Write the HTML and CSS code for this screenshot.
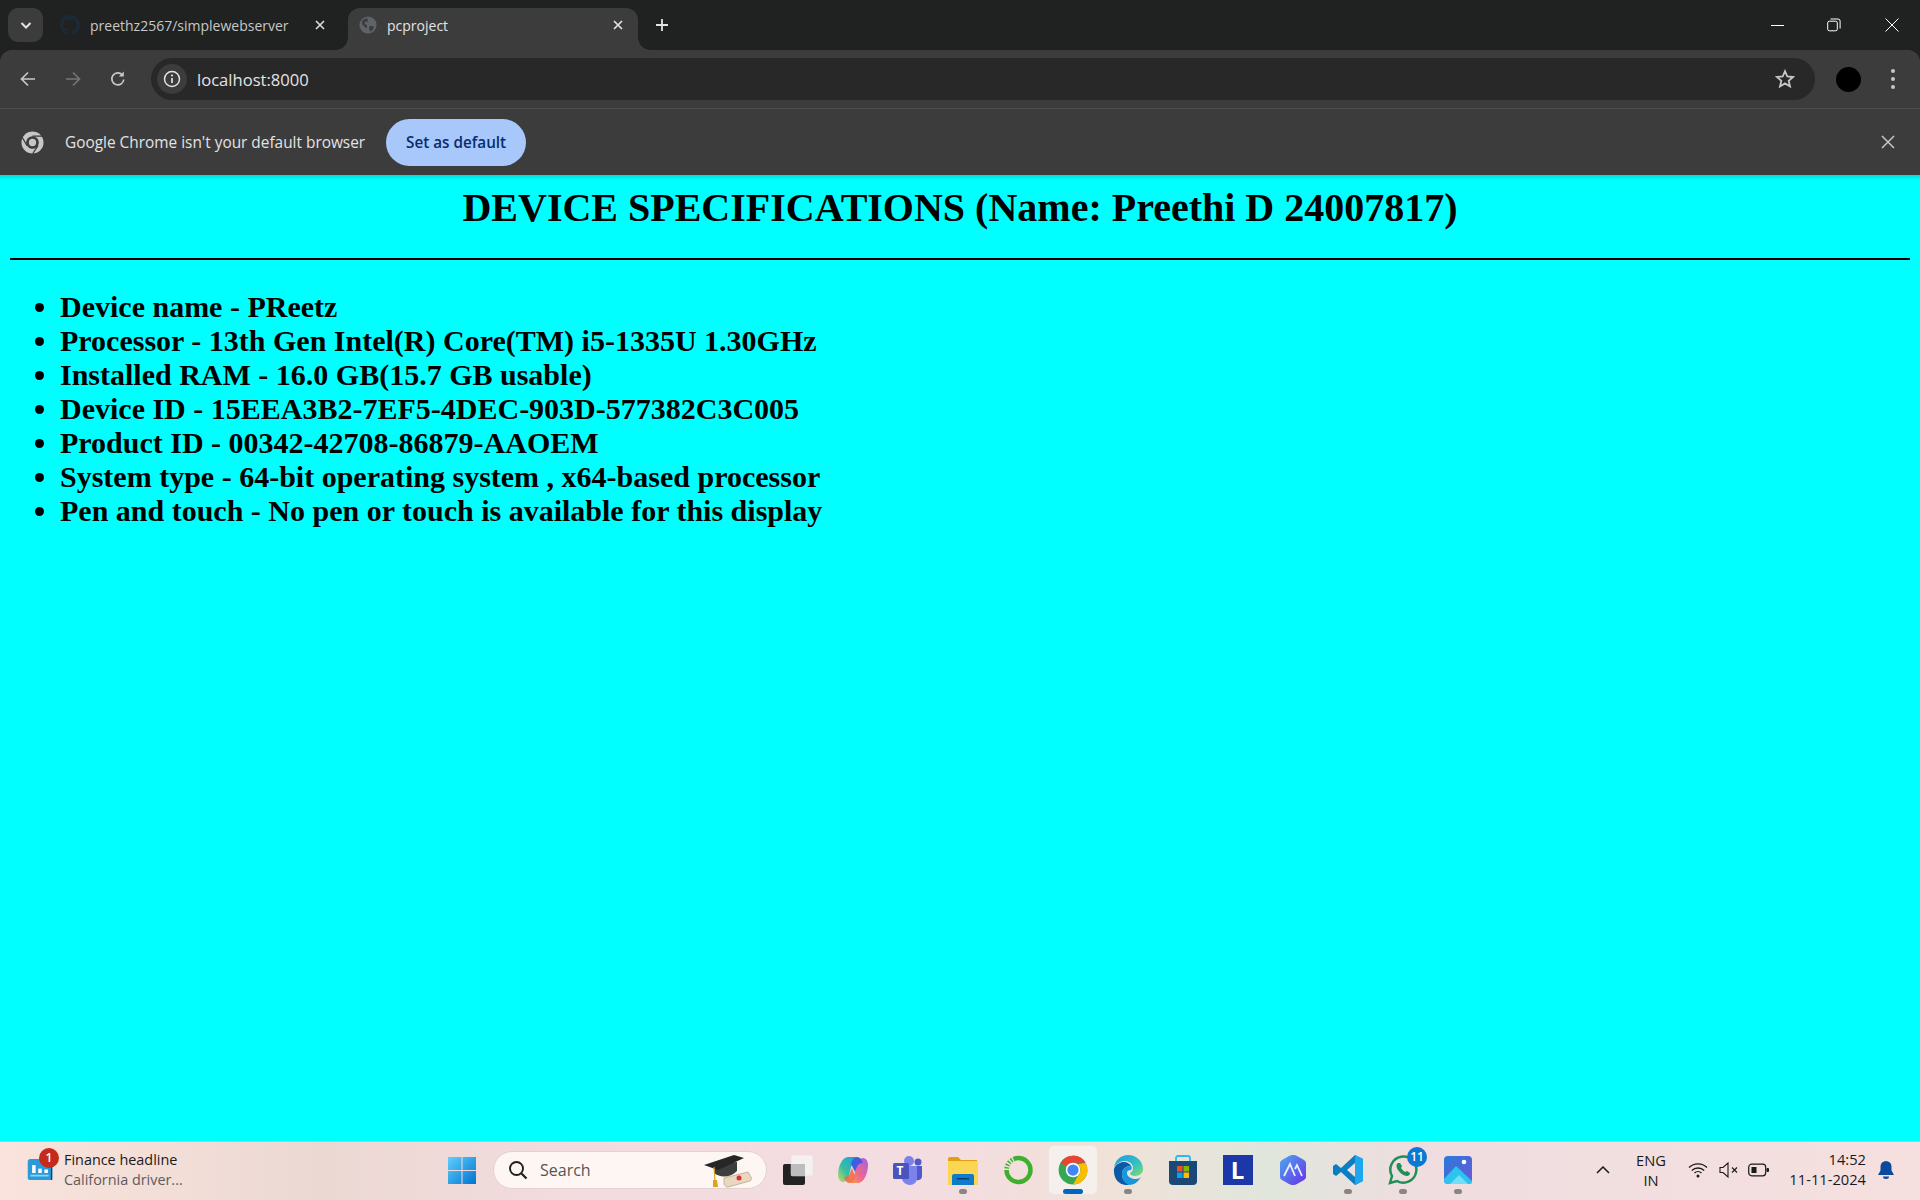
FILE: index.html
```html
<!DOCTYPE html>
<html lang="en">
<head>
<meta charset="utf-8">
<title>pcproject</title>
<link rel="stylesheet" href="styles.css">
</head>
<body>
<header class="browser">
  <div class="tabstrip">
    <button class="tabsearch"><svg class="i14" viewBox="0 0 14 14"><path d="M2.5 5l4.5 4.5L11.5 5" fill="none" stroke="#e3e3e3" stroke-width="2"/></svg></button>
    <div class="tab">
      <svg class="fav" viewBox="0 0 16 16"><path fill="#1d2a35" d="M8 0C3.58 0 0 3.58 0 8c0 3.54 2.29 6.53 5.47 7.59.4.07.55-.17.55-.38v-1.49c-2.01.37-2.53-.49-2.69-.94-.09-.23-.48-.94-.82-1.13-.28-.15-.68-.52-.01-.53.63-.01 1.08.58 1.23.82.72 1.21 1.87.87 2.33.66.07-.52.28-.87.51-1.07-1.78-.2-3.64-.89-3.64-3.95 0-.87.31-1.59.82-2.15-.08-.2-.36-1.02.08-2.12 0 0 .67-.21 2.2.82.64-.18 1.32-.27 2-.27s1.36.09 2 .27c1.53-1.04 2.2-.82 2.2-.82.44 1.1.16 1.92.08 2.12.51.56.82 1.27.82 2.15 0 3.07-1.87 3.75-3.65 3.95.29.25.54.73.54 1.48v2.2c0 .21.15.46.55.38A8.01 8.01 0 0 0 16 8c0-4.42-3.58-8-8-8z"/></svg>
      <span class="tabtitle">preethz2567/simplewebserver</span>
      <svg class="tabx" viewBox="0 0 12 12"><path d="M2 2l8 8M10 2l-8 8" stroke="#d8d8d8" stroke-width="1.7"/></svg>
    </div>
    <div class="tab active">
      <svg class="fav" viewBox="0 0 20 20"><circle cx="10" cy="10" r="9.500" fill="#5f6368"/><path fill="#3c3c3c" d="M9 2.200C7 3 4.600 3.900 3.200 5.800l.5 3.600L7.500 13l1.500 .3-.1-3L6 8.200l1-1.700 3.200-.5zM13.500 11l-2 .5-.2 3.500 1.500 2.500 3-3 .7-3z"/></svg>
      <span class="tabtitle">pcproject</span>
      <svg class="tabx" viewBox="0 0 12 12"><path d="M2 2l8 8M10 2l-8 8" stroke="#e3e3e3" stroke-width="1.7"/></svg>
    </div>
    <svg class="newtab" viewBox="0 0 14 14"><path d="M7 1v12M1 7h12" stroke="#e3e3e3" stroke-width="1.8"/></svg>
    <div class="winctl">
      <svg viewBox="0 0 14 14"><path d="M0 7.5h13" stroke="#fff" stroke-width="1"/></svg>
      <svg viewBox="0 0 14 14"><rect x=".7" y="3.2" width="9.6" height="9.6" rx="1.6" fill="none" stroke="#fff" stroke-width="1"/><path d="M3.5 1h7.600a2 2 0 0 1 2 2v7.500" fill="none" stroke="#fff" stroke-width="1"/></svg>
      <svg viewBox="0 0 14 14"><path d="M.5.5l13 13M13.500.5l-13 13" stroke="#fff" stroke-width="1"/></svg>
    </div>
  </div>
  <div class="toolbar">
    <svg class="navicon" viewBox="0 0 18 18"><path d="M16 9H3M9 2.500L2.500 9 9 15.500" fill="none" stroke="#c7c7c7" stroke-width="1.700"/></svg>
    <svg class="navicon" viewBox="0 0 18 18"><path d="M2 9h13M9 2.500L15.500 9 9 15.500" fill="none" stroke="#757575" stroke-width="1.700"/></svg>
    <svg class="navicon" viewBox="0 0 18 18"><path d="M14.800 9.500A6 6 0 1 1 13.200 4.700" fill="none" stroke="#c7c7c7" stroke-width="1.700"/><path d="M14.800 1.500v5h-5z" fill="#c7c7c7"/></svg>
    <div class="omnibox">
      <span class="siteinfo"><svg class="i18" viewBox="0 0 18 18"><circle cx="9" cy="9" r="7.500" fill="none" stroke="#e3e3e3" stroke-width="1.500"/><path d="M9 8v5" stroke="#e3e3e3" stroke-width="1.700"/><circle cx="9" cy="5.500" r="1.100" fill="#e3e3e3"/></svg></span>
      <span class="url">localhost:8000</span>
      <svg class="star" viewBox="0 0 20 20"><path d="M10 2.200l2.300 5.300 5.700.5-4.300 3.800 1.300 5.600-5-3-5 3 1.300-5.600L2 8l5.700-.5z" fill="none" stroke="#c7c7c7" stroke-width="1.800"/></svg>
    </div>
    <span class="avatar"></span>
    <span class="menu"><i></i><i></i><i></i></span>
  </div>
  <div class="infobar">
    <svg class="chromemono" viewBox="0 0 24 24"><circle cx="12" cy="12" r="11.500" fill="#c7c7c7"/><circle cx="12" cy="12" r="6.600" fill="#3c3c3c"/><circle cx="12" cy="12" r="3.800" fill="#c7c7c7"/><path d="M12 5.400h11M6.300 15.300L1.200 6.500M17.700 15.300L12 24" stroke="#3c3c3c" stroke-width="1.300"/></svg>
    <span class="infotext">Google Chrome isn't your default browser</span>
    <button class="setdefault">Set as default</button>
    <svg class="infox" viewBox="0 0 14 14"><path d="M1 1l12 12M13 1L1 13" stroke="#c7c7c7" stroke-width="1.500"/></svg>
  </div>
</header>

<main class="page">
  <h1>DEVICE SPECIFICATIONS (Name: Preethi D 24007817)</h1>
  <hr>
  <ul>
    <li>Device name - PReetz</li>
    <li>Processor - 13th Gen Intel(R) Core(TM) i5-1335U 1.30GHz</li>
    <li>Installed RAM - 16.0 GB(15.7 GB usable)</li>
    <li>Device ID - 15EEA3B2-7EF5-4DEC-903D-577382C3C005</li>
    <li>Product ID - 00342-42708-86879-AAOEM</li>
    <li>System type - 64-bit operating system , x64-based processor</li>
    <li>Pen and touch - No pen or touch is available for this display</li>
  </ul>
</main>

<footer class="taskbar">
  <div class="widget">
    <span class="widgeticon">
      <svg viewBox="0 0 28 24"><rect width="28" height="24" y="0" rx="3" fill="#2a9bd8"/><rect x="5" y="7" width="4" height="9" fill="#fff"/><rect x="12" y="11" width="4" height="5" fill="#fff"/><rect x="19" y="12" width="4" height="4" fill="#fff"/><rect x="3" y="18" width="21" height="2" fill="#7fdcf5"/><rect x="26.500" y="0" width="1.500" height="24" fill="#1a3a8a"/></svg>
      <b class="widgetbadge">1</b>
    </span>
    <span class="widgettext"><span class="wt1">Finance headline</span><span class="wt2">California driver...</span></span>
  </div>
  <div class="app start">
    <svg class="ic30" viewBox="0 0 30 30"><defs><linearGradient id="win" x1="0" y1="0" x2="1" y2="1"><stop offset="0" stop-color="#5fd0fb"/><stop offset="1" stop-color="#0073d1"/></linearGradient></defs><path fill="url(#win)" d="M1 2h13.500v13H1zM15.500 2H29v13H15.500zM1 16h13.500v13H1zM15.500 16H29v13H15.500z"/></svg>
  </div>
  <div class="search">
    <svg class="searchicon" viewBox="0 0 20 20"><circle cx="8.500" cy="8.500" r="6.500" fill="none" stroke="#1f1f1f" stroke-width="1.900"/><path d="M13.500 13.500l5 5" stroke="#1f1f1f" stroke-width="2.200"/></svg>
    <span class="searchtext">Search</span>
    <svg class="cap" viewBox="0 0 48 36"><path d="M20 26l24-6 3 5c1 2 0 3-1 4l-22 6c-2 .4-3-1-4-3z" fill="#e9d8bf" stroke="#b9a78a" stroke-width=".8"/><circle cx="35" cy="26" r="2.500" fill="#d9303a"/><path d="M10 12v9c6 5 16 5 23-2v-9z" fill="#3d3d3d"/><path d="M0 13L30 3l10 3-26 12z" fill="#262626"/><path d="M10 15l1 14" stroke="#d8a520" stroke-width="1.200"/><path d="M9 28h4l1 7h-5z" fill="#d8a520"/></svg>
  </div>
  <div class="apps">
    <div class="app"><svg class="ic30" viewBox="0 0 30 30"><rect x="0" y="9" width="22" height="21" rx="2" fill="#222"/><rect x="8" y="0" width="22" height="21" rx="2" fill="#f4f1f0" stroke="#ddd" stroke-width=".5"/><rect x="8" y="9" width="14" height="12" fill="#bdbdbd"/></svg></div>
    <div class="app"><svg class="ic30" viewBox="0 0 30 30"><defs><linearGradient id="cp1" x1="0" y1="1" x2="1" y2="0"><stop offset="0" stop-color="#d8d860"/><stop offset=".4" stop-color="#37c0a0"/><stop offset="1" stop-color="#1f9be8"/></linearGradient><linearGradient id="cp2" x1="1" y1="0" x2="0" y2="1"><stop offset="0" stop-color="#a860e0"/><stop offset=".6" stop-color="#f06a8a"/><stop offset="1" stop-color="#ffa040"/></linearGradient><linearGradient id="cp3" x1="0" y1="0" x2="1" y2="1"><stop offset="0" stop-color="#1f6ae0"/><stop offset="1" stop-color="#7048e0"/></linearGradient></defs><path fill="url(#cp1)" d="M10 2h9c-3 1-4 4-5 7l-3 11c-1 4-3 7-6 7-3 0-5-3-5-7C0 12 4 2 10 2z"/><path fill="url(#cp2)" d="M20 28h-9c3-1 4-4 5-7l3-11c1-4 3-7 6-7 3 0 5 3 5 7 0 8-4 18-10 18z"/><path fill="url(#cp3)" d="M13 9c1-4 3-7 6-7 3 0 5 3 6 6-3 0-5 1-6 4l-2 5z"/><path fill="#f0653f" d="M17 21c-1 4-3 7-6 7-2 0-4-3-5-6 3 0 5-1 6-4l2-5z" opacity=".85"/></svg></div>
    <div class="app"><svg class="ic30" viewBox="0 0 30 30"><circle cx="16" cy="6" r="5" fill="#7b83eb"/><circle cx="25" cy="7" r="3.500" fill="#5059c9"/><path d="M21 11h8v10c0 4-4 5-8 4z" fill="#5059c9"/><path d="M9 11h15v12c0 4-3 7-7 7s-8-3-8-7z" fill="#7b83eb"/><rect x="0" y="8" width="16" height="16" rx="1.500" fill="#4b53bc"/></svg><b class="teamst">T</b></div>
    <div class="app dotted"><svg class="ic30" viewBox="0 0 30 30"><path d="M0 4a2 2 0 0 1 2-2h8l3 3h16v6H0z" fill="#e0a010"/><path d="M0 6h30v24H0z" fill="#fcd653"/><path d="M4 30v-9a2 2 0 0 1 2-2h18a2 2 0 0 1 2 2v9z" fill="#0f7cc9"/><rect x="9" y="23" width="12" height="1.500" fill="#063d70"/></svg></div>
    <div class="app"><svg class="ic30" viewBox="0 0 30 30"><circle cx="15.500" cy="15" r="12" fill="none" stroke="#3fb02c" stroke-width="4.500"/><path d="M3.500 15a12 12 0 0 1 7-11" fill="none" stroke="#f0e2e2" stroke-width="5" stroke-dasharray="1.500 1.500"/></svg></div>
    <div class="app current"><svg class="ic30" viewBox="0 0 24 24"><circle cx="12" cy="12" r="11.500" fill="#34a853"/><path d="M12 .5a11.500 11.500 0 0 1 10 5.750H12a5.750 5.750 0 0 0-5 2.900L2 6.500A11.500 11.500 0 0 1 12 .5z" fill="#ea4335"/><path d="M22 6.250A11.500 11.500 0 0 1 12 23.500l5-8.600a5.750 5.750 0 0 0-1-7.500z" fill="#fbbc04"/><circle cx="12" cy="12" r="5.800" fill="#fff"/><circle cx="12" cy="12" r="4.500" fill="#4285f4"/></svg></div>
    <div class="app dotted"><svg class="ic30" viewBox="0 0 30 30"><defs><linearGradient id="edg" x1="0" y1="0" x2="1" y2="1"><stop offset="0" stop-color="#1b9de2"/><stop offset=".6" stop-color="#35c1c0"/><stop offset="1" stop-color="#7de26d"/></linearGradient></defs><path fill="url(#edg)" d="M15 0c8 0 15 6 15 14 0 4-3 7-8 7-3 0-5-1-5-3 2-1 3-2 3-5 0-4-4-7-8-7-5 0-9 3-11 7C2 5 8 0 15 0z"/><path fill="#0b5aa8" d="M1 14c2-5 6-7 10-7 3 0 6 2 7 4-5 0-9 3-9 8 0 4 2 8 7 11-9 1-16-6-15-16z"/><path fill="#1696dd" d="M9 19c0-5 4-8 9-8 1 1 1 2 0 4-3 0-4 1-4 3 0 4 5 6 9 6 2 0 4-1 5-2-3 5-7 8-12 8-4-2-7-6-7-11z"/></svg></div>
    <div class="app"><svg class="ic30" viewBox="0 0 30 30"><path d="M8 8V3a2 2 0 0 1 2-2h10a2 2 0 0 1 2 2v5" fill="none" stroke="#2fb8f0" stroke-width="1.800"/><path d="M1 6h28v20a4 4 0 0 1-4 4H5a4 4 0 0 1-4-4z" fill="#1c4878"/><rect x="9" y="11" width="5.500" height="5.500" fill="#f25022"/><rect x="15.500" y="11" width="5.500" height="5.500" fill="#7fba00"/><rect x="9" y="17.500" width="5.500" height="5.500" fill="#00a4ef"/><rect x="15.500" y="17.500" width="5.500" height="5.500" fill="#ffb900"/></svg></div>
    <div class="app"><span class="lapp">L</span></div>
    <div class="app"><svg class="ic30" viewBox="0 0 30 30"><defs><linearGradient id="hx" x1="0" y1="0" x2="1" y2="1"><stop offset="0" stop-color="#4aa8f0"/><stop offset="1" stop-color="#6a30e8"/></linearGradient></defs><path d="M11 1a8 8 0 0 1 8 0l7 4a4 4 0 0 1 2 4v12a4 4 0 0 1-2 4l-7 4a8 8 0 0 1-8 0l-7-4a4 4 0 0 1-2-4V9a4 4 0 0 1 2-4z" fill="url(#hx)"/><path d="M6 21l6-12 5 12M17 14l2-4 5 11" fill="none" stroke="#e8f0ff" stroke-width="1.800"/></svg></div>
    <div class="app dotted"><svg class="ic30" viewBox="0 0 30 30"><path d="M22 0l8 4v22l-8 4L8 17l-5 4-3-2V11l3-2 5 4z" fill="#0a7ec2"/><path d="M22 0l8 4v22l-8 4z" fill="#1ea6ef"/><path d="M22 8l-8 7 8 7z" fill="#f0dfe0"/></svg></div>
    <div class="app dotted"><svg class="ic30" viewBox="0 0 30 30"><path d="M2 28l2-7A13 13 0 1 1 9 26z" fill="none" stroke="#1f8f55" stroke-width="2.500"/><path d="M10 8c-2 1-2 4 0 7s6 6 9 6c2 0 3-2 3-3l-3-2-2 1c-2-1-3-3-4-4l1-2-2-3z" fill="#1f8f55"/></svg><b class="wabadge">11</b></div>
    <div class="app dotted"><svg class="ic30" viewBox="0 0 30 30"><defs><linearGradient id="ph" x1="0" y1="0" x2="1" y2="1"><stop offset="0" stop-color="#2a7ad8"/><stop offset="1" stop-color="#6a58d8"/></linearGradient></defs><rect x="1" y="1" width="28" height="28" rx="4" fill="url(#ph)"/><circle cx="21" cy="7" r="2.300" fill="#fff"/><path d="M1 24l12-13 16 15v1a2 2 0 0 1-2 2H5a4 4 0 0 1-4-4z" fill="#2cc4ee"/><path d="M7 29l9-9 9 9z" fill="#6fe0f8"/></svg></div>
  </div>
  <div class="tray">
    <svg class="trayup" viewBox="0 0 14 8"><path d="M1 7l6-6 6 6" fill="none" stroke="#1a1a1a" stroke-width="1.500"/></svg>
    <div class="lang"><span>ENG</span><span>IN</span></div>
    <svg class="trayicon" viewBox="0 0 20 20"><path d="M1 7.500a13 13 0 0 1 18 0M3.800 10.500a9 9 0 0 1 12.400 0M6.500 13a5 5 0 0 1 7 0" fill="none" stroke="#1a1a1a" stroke-width="1.300"/><circle cx="10" cy="16" r="1.500" fill="#1a1a1a"/></svg>
    <svg class="trayicon" viewBox="0 0 20 20"><path d="M1 7.500h3l5-4.500v14l-5-4.500H1z" fill="none" stroke="#1a1a1a" stroke-width="1.100"/><path d="M13 7.500l5 5M18 7.500l-5 5" stroke="#1a1a1a" stroke-width="1.100"/></svg>
    <svg class="battery" viewBox="0 0 22 14"><rect x=".7" y="1.200" width="17" height="11.600" rx="3" fill="none" stroke="#1a1a1a" stroke-width="1.200"/><rect x="3.500" y="4" width="5" height="6" fill="#1a1a1a"/><rect x="18.500" y="5" width="2.500" height="4" rx="1" fill="#1a1a1a"/></svg>
    <div class="clock"><span>14:52</span><span>11-11-2024</span></div>
    <svg class="bell" viewBox="0 0 18 20"><path d="M9 1a5.500 5.500 0 0 1 5.500 5.500v4L17 15H1l2.500-4.500v-4A5.500 5.500 0 0 1 9 1z" fill="#0a4a9e"/><path d="M6 16.500h6a3 2.500 0 0 1-6 0z" fill="#0a4a9e"/></svg>
  </div>
</footer>
</body>
</html>
```

FILE: styles.css
```css
* { box-sizing: border-box; }
html, body { height: 100%; }
body {
  margin: 0;
  display: flex;
  flex-direction: column;
  height: 1200px;
  overflow: hidden;
  font-family: "Open Sans", "Noto Sans", sans-serif;
}
svg { display: block; flex: none; }

.browser { background: #202221; }
.tabstrip {
  height: 50px;
  display: flex;
  align-items: flex-end;
  padding-left: 8px;
}
.tabsearch {
  width: 35px;
  height: 34px;
  margin-bottom: 8px;
  border: 0;
  border-radius: 10px;
  background: #3c3c3c;
  display: flex;
  align-items: center;
  justify-content: center;
  padding: 0;
}
.i14 { width: 14px; height: 14px; }
.tab {
  position: relative;
  width: 290px;
  height: 42px;
  padding: 0 14px 8px 11px;
  display: flex;
  align-items: center;
  color: #c7c7c7;
  font-size: 14px;
  border-radius: 12px 12px 0 0;
}
.tab:first-of-type { width: 305px; padding: 0 22px 8px 17px; }
.tab.active { background: #3c3c3c; color: #e3e3e3; }
.tab.active::before,
.tab.active::after {
  content: "";
  position: absolute;
  bottom: 0;
  width: 12px;
  height: 12px;
}
.tab.active::before {
  left: -12px;
  background: radial-gradient(circle at 0 0, transparent 11.500px, #3c3c3c 12px);
}
.tab.active::after {
  right: -12px;
  background: radial-gradient(circle at 100% 0, transparent 11.500px, #3c3c3c 12px);
}
.fav { width: 20px; height: 20px; }
.tab.active .fav { width: 18px; height: 18px; }
.tabtitle { margin-left: 10px; flex: 1; white-space: nowrap; }
.tabx { width: 12px; height: 12px; }
.newtab { width: 14px; height: 14px; margin: 0 0 18px 17px; }
.winctl {
  margin-left: auto;
  display: flex;
  gap: 42px;
  padding: 0 21px 0 0;
  align-self: center;
}
.winctl svg { width: 14px; height: 14px; }
.winctl svg:last-child { margin-left: 2px; }

.toolbar {
  height: 59px;
  background: #3c3c3c;
  border-radius: 12px 12px 0 0;
  border-bottom: 1px solid #4c4c4c;
  display: flex;
  align-items: center;
  padding: 0 25px 0 19px;
}
.navicon { width: 18px; height: 18px; margin-right: 27px; }
.navicon:nth-of-type(3) { margin-right: 24px; }
.omnibox {
  flex: 1;
  height: 42px;
  background: #282828;
  border-radius: 21px;
  display: flex;
  align-items: center;
  padding: 0 20px 0 6px;
  color: #e3e3e3;
}
.siteinfo {
  width: 30px;
  height: 30px;
  border-radius: 50%;
  background: #3c3c3c;
  display: flex;
  align-items: center;
  justify-content: center;
}
.i18 { width: 18px; height: 18px; }
.url { margin-left: 10px; font-size: 16.600px; flex: 1; }
.star { width: 20px; height: 20px; }
.avatar {
  width: 25px;
  height: 25px;
  border-radius: 50%;
  background: #000;
  margin-left: 21px;
}
.menu {
  margin-left: 30px;
  display: flex;
  flex-direction: column;
  gap: 4px;
}
.menu i { width: 4px; height: 4px; border-radius: 50%; background: #c7c7c7; }

.infobar {
  height: 66px;
  background: #3c3c3c;
  display: flex;
  align-items: center;
  padding: 0 25px 0 21px;
  color: #e3e3e3;
  font-size: 15.400px;
}
.chromemono { width: 23px; height: 23px; }
.infotext { margin-left: 21px; }
.setdefault {
  margin-left: 21px;
  width: 140px;
  height: 47px;
  border: 0;
  border-radius: 24px;
  background: #a8c7fa;
  color: #062e6f;
  font: 600 15.250px "Open Sans", sans-serif;
}
.infox { width: 14px; height: 14px; margin-left: auto; }

.page {
  flex: 1;
  background: linear-gradient(#00dcdc, #0ff 5px) #0ff;
  padding: 10px 10px 0;
  color: #000;
  font-family: "Liberation Serif", serif;
}
.page h1 {
  margin: 0;
  font-size: 40px;
  line-height: 46px;
  font-weight: 700;
  text-align: center;
}
.page hr {
  margin: 27px 0 30px;
  height: 2px;
  border: 0;
  background: #000;
}
.page ul { margin: 0; padding-left: 50px; }
.page li { font-size: 30px; line-height: 34px; font-weight: 700; }

.taskbar {
  height: 59px;
  padding-bottom: 2px;
  background: linear-gradient(90deg, #f9e3dc 0, #ecd8d3 17%, #f2dcdf 30%, #f4dde0 50%, #f0e2d8 58%, #e0e6dc 66%, #efdddf 74%, #f6e0df 100%);
  border-top: 1px solid #cdbdbd;
  display: flex;
  align-items: center;
  color: #1a1a1a;
}
.widget { width: 434px; display: flex; align-items: center; padding-left: 26px; }
.widgeticon { position: relative; width: 28px; height: 21px; margin-bottom: 1px; }
.widgeticon svg { width: 28px; height: 21px; }
.widgetbadge {
  position: absolute;
  left: 13px;
  top: -11px;
  width: 20px;
  height: 20px;
  border-radius: 50%;
  background: #c42b1c;
  color: #fff;
  font: 600 12px/20px "Open Sans", sans-serif;
  text-align: center;
}
.widgettext { display: flex; flex-direction: column; margin-left: 10px; font-size: 14.400px; line-height: 20px; }
.wt2 { color: #5c5c5c; }
.app {
  width: 55px;
  height: 48px;
  display: flex;
  align-items: center;
  justify-content: center;
  position: relative;
  border-radius: 5px;
}
.ic30 { width: 30px; height: 30px; }
.search {
  width: 274px;
  height: 38px;
  margin-left: 4px;
  border-radius: 19px;
  background: #fdf6f3;
  border: 1px solid #e4d0d0;
  display: flex;
  align-items: center;
  padding: 0 14px 0 14px;
}
.searchicon { width: 20px; height: 20px; }
.searchtext { margin-left: 12px; font-size: 16px; color: #555; flex: 1; }
.cap { width: 48px; height: 36px; }
.apps { display: flex; margin-left: 3px; }
.dotted::after {
  content: "";
  position: absolute;
  left: 50%;
  bottom: 0;
  width: 8px;
  height: 5px;
  margin-left: -4px;
  border-radius: 3px;
  background: #8a8484;
}
.current {
  width: 48px;
  margin: 0 3.500px;
  background: #f6f0ec;
  box-shadow: 0 0 0 1px #eee3df;
}
.current::after {
  content: "";
  position: absolute;
  left: 50%;
  bottom: 0;
  width: 20px;
  height: 5px;
  margin-left: -10px;
  border-radius: 3px;
  background: #0067c0;
}
.teamst {
  position: absolute;
  left: 12px;
  top: 17px;
  width: 16px;
  color: #fff;
  font: 700 12px/16px "Open Sans", sans-serif;
  text-align: center;
}
.lapp {
  width: 30px;
  height: 30px;
  background: #1c38a8;
  color: #fff;
  font: 700 24px/30px "Open Sans", sans-serif;
  text-align: center;
}
.wabadge {
  position: absolute;
  right: 3px;
  top: 1px;
  width: 20px;
  height: 20px;
  border-radius: 50%;
  background: #0a78d4;
  color: #fff;
  font: 600 12px/20px "Open Sans", sans-serif;
  text-align: center;
}
.tray {
  flex: 1;
  display: flex;
  align-items: center;
  padding-right: 25px;
  font-size: 14.700px;
  line-height: 20px;
}
.trayup { width: 14px; height: 8px; margin-left: 111px; }
.lang { display: flex; flex-direction: column; align-items: center; width: 40px; margin-left: 21px; }
.trayicon { width: 20px; height: 20px; margin-left: 11px; }
.lang + .trayicon { margin-left: 17px; }
.battery { width: 22px; height: 14px; margin-left: 9px; }
.clock { display: flex; flex-direction: column; align-items: flex-end; margin-left: auto; transform: translateY(-1px); }
.bell { width: 18px; height: 20px; margin-left: 11px; }
```
